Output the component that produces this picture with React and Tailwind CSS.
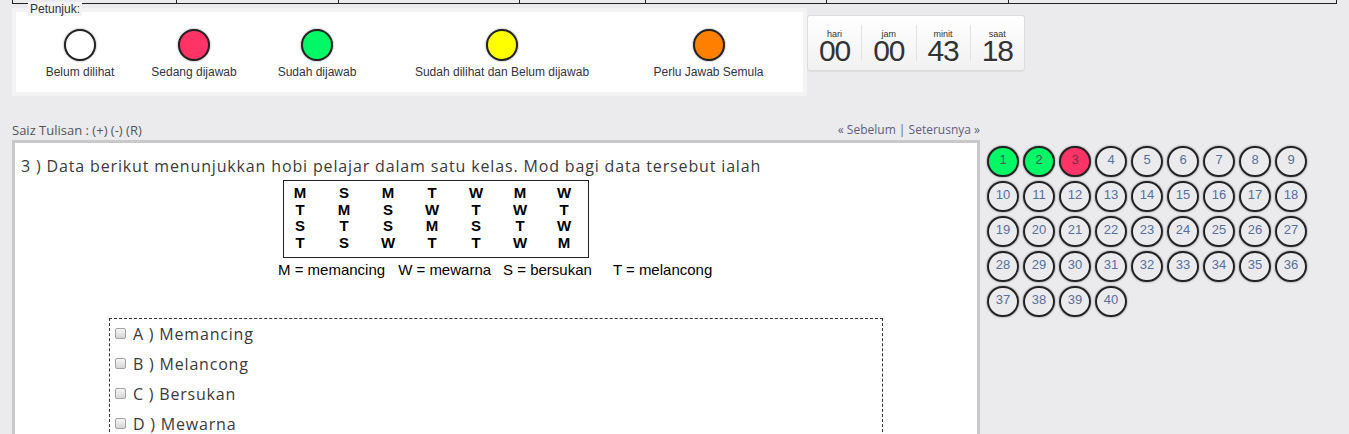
import React from "react";

const legendItems = [
  { label: "Belum dilihat", color: "bg-white", w: "w-[128px]" },
  { label: "Sedang dijawab", color: "bg-[#ff3366]", w: "w-[100px]" },
  { label: "Sudah dijawab", color: "bg-[#00f766]", w: "w-[146px]" },
  { label: "Sudah dilihat dan Belum dijawab", color: "bg-[#ffff00]", w: "w-[224px]" },
  { label: "Perlu Jawab Semula", color: "bg-[#ff8000]", w: "w-[189px]" },
];

const grid = [
  ["M", "S", "M", "T", "W", "M", "W"],
  ["T", "M", "S", "W", "T", "W", "T"],
  ["S", "T", "S", "M", "S", "T", "W"],
  ["T", "S", "W", "T", "T", "W", "M"],
];

const options = ["A ) Memancing", "B ) Melancong", "C ) Bersukan", "D ) Mewarna"];

function Countdown() {
  const segs = [
    ["hari", "00"],
    ["jam", "00"],
    ["minit", "43"],
    ["saat", "18"],
  ];
  return (
    <div className="mt-[11px] flex w-[218px] h-[56px] rounded-[3px] border border-[#dcdcdc] bg-gradient-to-b from-white to-[#f1f1f1] shadow-[0_1px_1px_rgba(0,0,0,0.05)] font-['Liberation_Sans',Arial,sans-serif] text-[#333]">
      {segs.map(([l, n], i) => (
        <React.Fragment key={l}>
          {i > 0 && <div className="w-px h-[36px] mt-[9px] bg-[#e2e2e2]" />}
          <div className="flex-1 flex flex-col items-center pt-[14px]">
            <div className="text-[9px] leading-[9px]">{l}</div>
            <div className="text-[30px] leading-[24px] tracking-[-1px] [text-shadow:0_1px_0_#fff]">{n}</div>
          </div>
        </React.Fragment>
      ))}
    </div>
  );
}

function NumCircle({ n }) {
  let bg = "";
  let tc = "text-[#56709a]";
  if (n === 1 || n === 2) {
    bg = "bg-[#00f766]";
    tc = "text-[#4c5a58]";
  } else if (n === 3) {
    bg = "bg-[#ff3366]";
    tc = "text-[#7a2a45]";
  }
  return (
    <div
      className={`w-[32px] h-[31px] rounded-full border-2 border-[#222] shadow-[0_0_2px_rgba(0,0,0,0.55)] flex items-center justify-center pb-[3px] text-[13px] ${bg} ${tc}`}
    >
      {n}
    </div>
  );
}

export default function App() {
  const nums = Array.from({ length: 40 }, (_, i) => i + 1);
  return (
    <div className="min-h-screen w-[1349px] bg-[#ebebed] font-['Liberation_Sans',Arial,sans-serif] overflow-hidden">
      {/* top table strip */}
      <div className="ml-[12px] flex w-[1325px] h-[4px] border-l border-b border-[#222]">
        <div className="w-[164px] border-r border-[#222]" />
        <div className="w-[162px] border-r border-[#222]" />
        <div className="w-[181px] border-r border-[#222]" />
        <div className="w-[126px] border-r border-[#222]" />
        <div className="w-[181px] border-r border-[#222]" />
        <div className="w-[182px] border-r border-[#222]" />
        <div className="w-[328px] border-r border-[#222]" />
      </div>

      {/* legend + countdown */}
      <div className="flex items-start ml-[12px]">
        <div className="relative mt-[4px] w-[795px] h-[88px] border-4 border-[#f3f3f4] bg-white">
          <span className="absolute top-[-10px] left-[12px] px-[2px] bg-[#f3f3f4] text-[12px] leading-[14px] text-[#333]">
            Petunjuk:
          </span>
          <div className="flex">
            {legendItems.map((it) => (
              <div key={it.label} className={`${it.w} flex flex-col items-center pt-[17px]`}>
                <div className={`w-[32px] h-[32px] rounded-full border-2 border-[#222] shadow-[0_0_2px_rgba(0,0,0,0.55)] ${it.color}`} />
                <div className="mt-[4px] text-[12px] leading-[14px] text-[#33333f] whitespace-nowrap">{it.label}</div>
              </div>
            ))}
          </div>
        </div>
        <Countdown />
      </div>

      {/* main */}
      <div className="mt-[25px] flex items-start">
        <div className="ml-[12px] w-[968px]">
          <div className="flex justify-between items-start h-[19px] leading-[18px] font-['Open_Sans','Noto_Sans',sans-serif]">
            <span className="text-[13px] text-[#555]">Saiz Tulisan : (+) (-) (R)</span>
            <span className="text-[12px] text-[#5e5e7c]">« Sebelum | Seterusnya »</span>
          </div>
          <div className="h-[320px] border-[3px] border-[#c8c8c8] bg-white pt-[11px] pl-[6px] font-['Open_Sans','Noto_Sans',sans-serif] text-[#3a3a3a]">
            <div className="text-[16px] leading-[24px] tracking-[0.85px] whitespace-nowrap">
              3 ) Data berikut menunjukkan hobi pelajar dalam satu kelas. Mod bagi data tersebut ialah
            </div>
            {/* picture of data */}
            <div className="ml-[257px] w-[433px] font-['Liberation_Sans',Arial,sans-serif] text-black">
              <div className="ml-[5px] mt-[2px] w-[306px] border-[1.5px] border-[#222] pt-[4px] pb-[5px]">
                {grid.map((row, r) => (
                  <div key={r} className="grid grid-cols-[repeat(7,32px)] gap-x-[12px] text-[15px] leading-[16.7px] font-bold">
                    {row.map((c, j) => (
                      <span key={j} className="text-center">{c}</span>
                    ))}
                  </div>
                ))}
              </div>
              <div className="mt-[3px] flex text-[15px] leading-[17px] whitespace-nowrap">
                <span>M = memancing</span>
                <span className="ml-[13px]">W = mewarna</span>
                <span className="ml-[12px]">S = bersukan</span>
                <span className="ml-[21px]">T = melancong</span>
              </div>
            </div>
            {/* options */}
            <div className="ml-[88px] mt-[40px] w-[774px] h-[200px] border border-dashed border-[#333]">
              {options.map((o) => (
                <div key={o} className="flex items-center h-[30px] text-[16px] tracking-[0.8px]">
                  <span className="ml-[5px] w-[11px] h-[11px] rounded-[2px] border border-[#a2a2a2] bg-gradient-to-b from-[#f6f6f6] to-[#d6d6d6]" />
                  <span className="ml-[7px]">{o}</span>
                </div>
              ))}
            </div>
          </div>
        </div>
        <div className="ml-[7px] pt-[25px] grid grid-cols-[repeat(9,32px)] gap-x-[4px] gap-y-[4px] font-['Liberation_Sans',Arial,sans-serif]">
          {nums.map((n) => (
            <NumCircle key={n} n={n} />
          ))}
        </div>
      </div>
    </div>
  );
}
